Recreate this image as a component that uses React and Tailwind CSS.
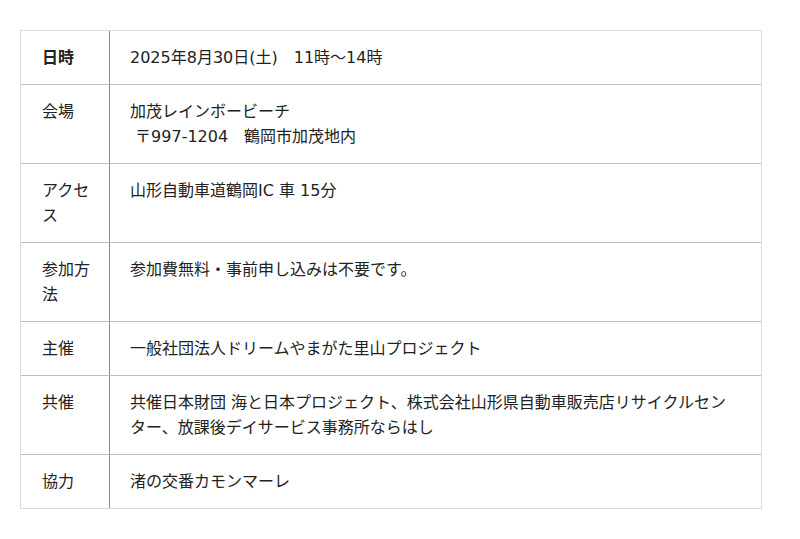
import React from 'react';

const rows = [
  { label: '日時', value: ['2025年8月30日(土)\u300011時〜14時'], bold: true },
  { label: '会場', value: ['加茂レインボービーチ', '\u00a0〒997-1204\u3000鶴岡市加茂地内'] },
  { label: 'アクセス', value: ['山形自動車道鶴岡IC 車 15分'] },
  { label: '参加方法', value: ['参加費無料・事前申し込みは不要です。'] },
  { label: '主催', value: ['一般社団法人ドリームやまがた里山プロジェクト'] },
  { label: '共催', value: ['共催日本財団 海と日本プロジェクト、株式会社山形県自動車販売店リサイクルセンター、放課後デイサービス事務所ならはし'] },
  { label: '協力', value: ['渚の交番カモンマーレ'] },
];

export default function App() {
  return (
    <div className="w-[800px] h-[539px] bg-white pt-[30px] px-[20px] font-['DejaVu_Sans','Noto_Sans_CJK_JP',sans-serif] text-[16px] leading-[25px] text-[#222]">
      <div className="w-[742px] border border-[#dcdcdc]">
        {rows.map((row, i) => (
          <div key={i} className={`grid grid-cols-[89px_1fr] ${i > 0 ? 'border-t border-[#bdbdbd]' : ''}`}>
            <div className={`py-[14px] pl-[21px] pr-[12px] border-r border-[#8c8c8c] ${row.bold ? 'font-bold' : ''}`}>
              {row.label}
            </div>
            <div className="py-[14px] pl-[20px] pr-[20px]">
              {row.value.map((line, j) => (
                <div key={j}>{line}</div>
              ))}
            </div>
          </div>
        ))}
      </div>
    </div>
  );
}
